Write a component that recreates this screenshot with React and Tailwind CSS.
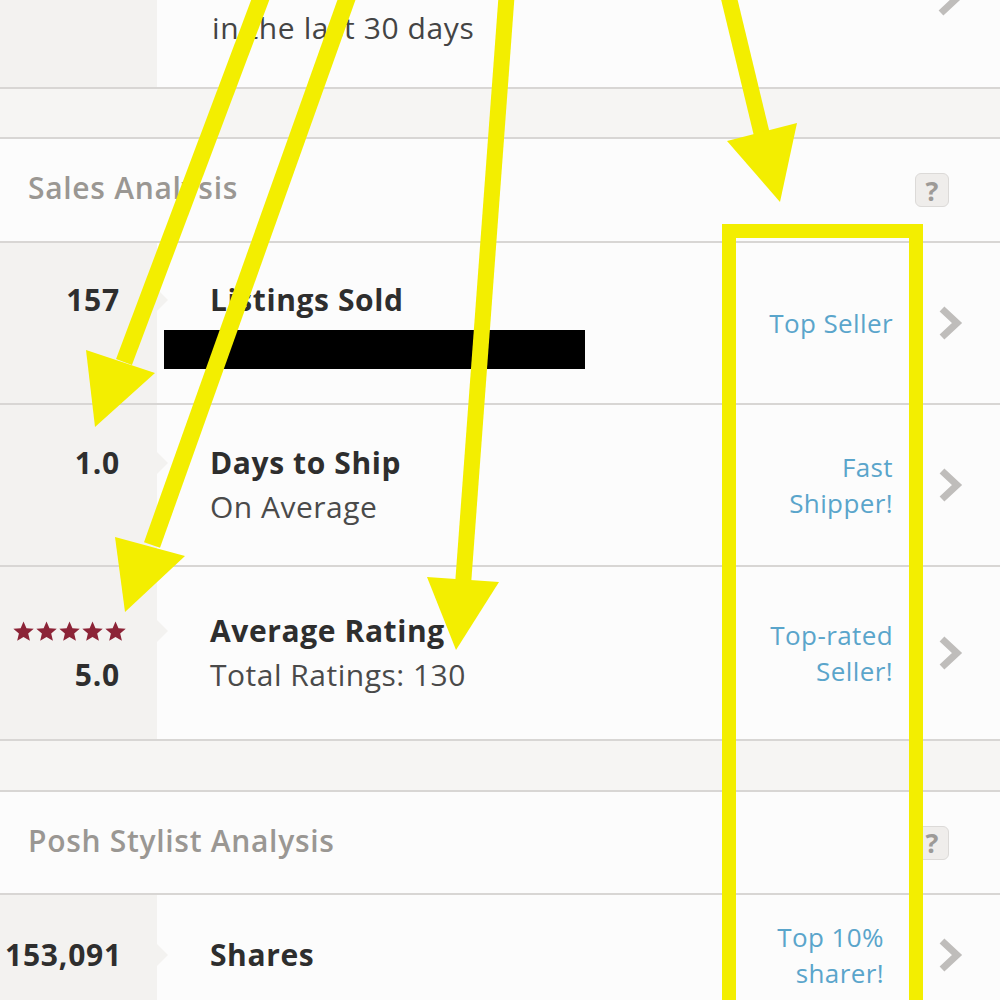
import React from "react";

const font = { fontFamily: "'Open Sans', Lato, sans-serif" };

function Chevron() {
  return (
    <svg width="26" height="36" viewBox="0 0 26 36" className="block">
      <polyline points="5,4 20,18 5,32" fill="none" stroke="#bfbdbb" strokeWidth="7" />
    </svg>
  );
}

function Star() {
  return (
    <svg width="23" height="23" viewBox="0 0 24 24" className="block">
      <path d="M12 1.5l3.1 7.1 7.6.6-5.8 5 1.8 7.5L12 17.7l-6.6 4 1.8-7.5-5.8-5 7.6-.6z" fill="#8c2437" />
    </svg>
  );
}

function Help() {
  return (
    <div className="w-[34px] h-[34px] rounded-md border border-[#dcdad8] bg-[#efedeb] flex items-center justify-center text-[27px] leading-none font-bold text-[#9d9a97]">
      ?
    </div>
  );
}

function SectionHeader({ title, h }) {
  return (
    <div className={`${h} flex items-center justify-between pl-[28px] pr-[51px] bg-[#fcfcfc] border-b-2 border-[#d8d6d4]`}>
      <span className="text-[30px] tracking-[0.7px] font-semibold text-[#9a9793] -mt-[5px]">{title}</span>
      <Help />
    </div>
  );
}

function Gap({ h }) {
  return <div className={`${h} bg-[#f6f5f3] border-b-2 border-[#d8d6d4]`} />;
}

function StatRow({ h, left, spacer, title, sub, badge, badgeMr = "mr-0" }) {
  return (
    <div className={`${h} flex border-b-2 border-[#d8d6d4] bg-[#fcfcfc]`}>
      <div className="w-[157px] shrink-0 bg-[#f3f2f0] flex flex-col justify-center items-end pr-[37px]">
        {left}
        {spacer}
      </div>
      <div className="flex-1 flex flex-col justify-center pl-[53px]">
        <div className="flex items-center h-[44px] relative">
          <div className="absolute -left-[53px] top-[11px] w-0 h-0 border-y-[11px] border-y-transparent border-l-[11px] border-l-[#f3f2f0]" />
          <span className="text-[30px] tracking-[0.6px] font-bold text-[#2e2e2e] leading-[44px] whitespace-nowrap">{title}</span>
        </div>
        {sub}
      </div>
      <div className={`flex items-center text-right text-[26px] tracking-[0.4px] leading-[36px] text-[#5aa5cb] ${badgeMr}`}>
        {badge}
      </div>
      <div className="w-[107px] flex items-center pl-[44px]">
        <Chevron />
      </div>
    </div>
  );
}

function Num({ children }) {
  return <div className="h-[44px] leading-[44px] text-[30px] tracking-[0.8px] font-bold text-[#2e2e2e]">{children}</div>;
}

function Sub({ children }) {
  return <div className="h-[44px] leading-[44px] text-[30px] tracking-[0.5px] text-[#4a4a4a] whitespace-nowrap">{children}</div>;
}

function Overlay() {
  const y = "#f3ee00";
  return (
    <svg className="absolute inset-0 pointer-events-none" width="1000" height="1000" viewBox="0 0 1000 1000">
      <line x1="264" y1="-10" x2="124" y2="362" stroke={y} strokeWidth="17" />
      <polygon points="86,350 155,373 95,427" fill={y} />
      <line x1="350" y1="-10" x2="152" y2="545" stroke={y} strokeWidth="17" />
      <polygon points="115,537 185,556 125,612" fill={y} />
      <line x1="507" y1="-10" x2="463" y2="585" stroke={y} strokeWidth="16" />
      <polygon points="427,577 499,582 456,650" fill={y} />
      <line x1="727" y1="-10" x2="762" y2="135" stroke={y} strokeWidth="16" />
      <polygon points="727,141 797,123 780,202" fill={y} />
      <rect x="729" y="231" width="187" height="820" fill="none" stroke={y} strokeWidth="14" />
    </svg>
  );
}

export default function App() {
  return (
    <div className="relative w-[1000px] h-[1000px] overflow-hidden bg-[#fcfcfc]" style={font}>
      <div className="h-[89px] flex border-b-2 border-[#d8d6d4] relative">
        <div className="w-[157px] bg-[#f3f2f0]" />
        <div className="flex-1 pl-[55px] pt-[6px] text-[30px] tracking-[0.6px] leading-[44px] text-[#444]">in the last 30 days</div>
        <div className="absolute right-[38px] -top-[19px]">
          <Chevron />
        </div>
      </div>
      <Gap h="h-[50px]" />
      <SectionHeader title="Sales Analysis" h="h-[104px]" />
      <StatRow
        h="h-[162px]"
        left={<Num>157</Num>}
        spacer={<div className="h-[47px]" />}
        title="Listings Sold"
        sub={<div className="mt-[8px] -ml-[46px] w-[421px] h-[39px] bg-black" />}
        badge={<span>Top Seller</span>}
      />
      <StatRow
        h="h-[162px]"
        left={<Num>1.0</Num>}
        spacer={<div className="h-[44px]" />}
        title="Days to Ship"
        sub={<Sub>On Average</Sub>}
        badge={<span>Fast<br />Shipper!</span>}
      />
      <StatRow
        h="h-[174px]"
        left={
          <>
            <div className="h-[44px] flex items-center gap-[0px] -mr-[7px]">
              <Star /><Star /><Star /><Star /><Star />
            </div>
            <Num>5.0</Num>
          </>
        }
        title="Average Rating"
        sub={<Sub>Total Ratings: 130</Sub>}
        badge={<span>Top-rated<br />Seller!</span>}
      />
      <Gap h="h-[51px]" />
      <SectionHeader title="Posh Stylist Analysis" h="h-[103px]" />
      <StatRow
        h="h-[122px]"
        left={<div className="-mr-[2px]"><Num>153,091</Num></div>}
        spacer={null}
        title="Shares"
        badge={<span>Top 10%<br />sharer!</span>}
        badgeMr="mr-[9px]"
      />
      <Overlay />
    </div>
  );
}
